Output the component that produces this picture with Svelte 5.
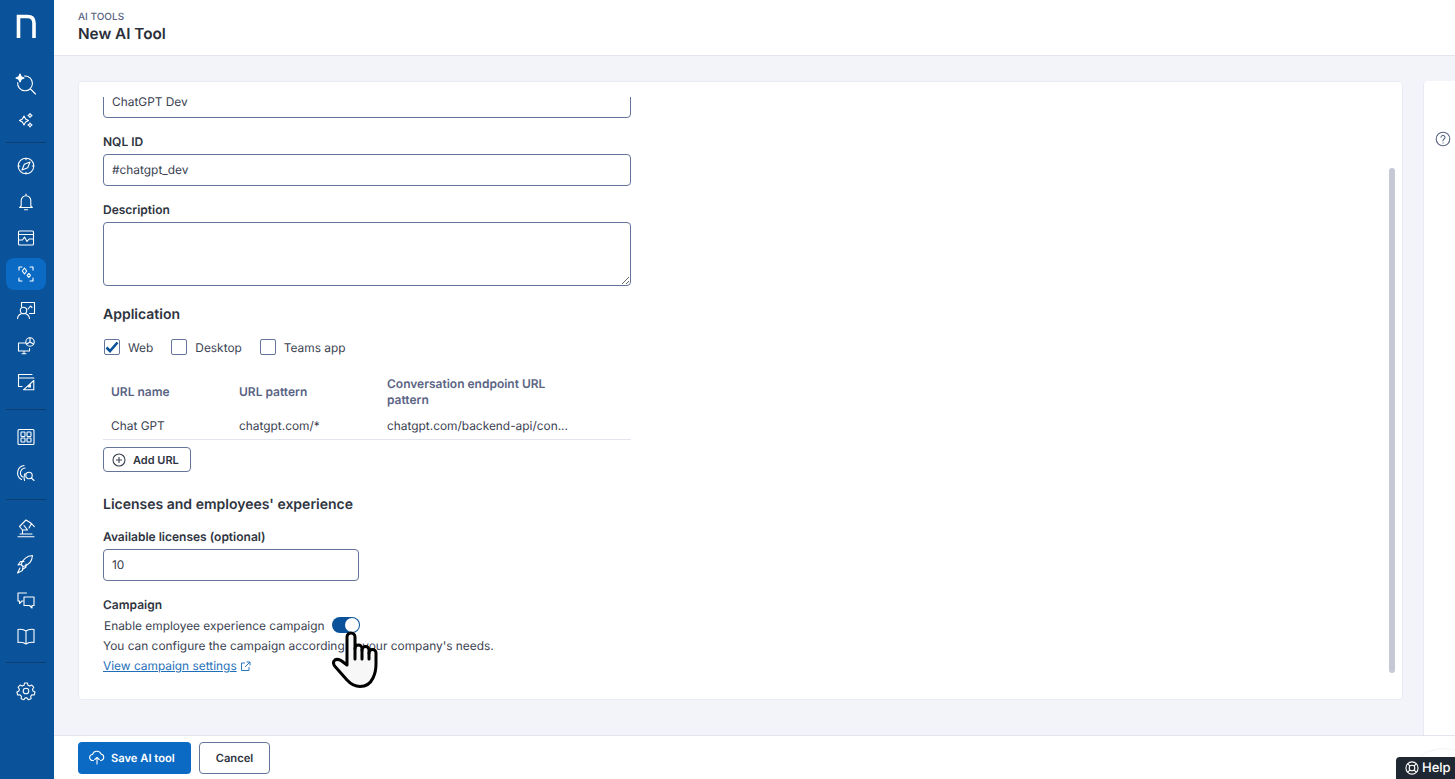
<script lang="ts">
	const groups = [
		['search', 'sparkles'],
		['compass', 'bell', 'chart', 'ai', 'people', 'device', 'design'],
		['grid', 'finger'],
		['robot', 'rocket', 'chat', 'book'],
		['gear']
	];

	const urls = [{ name: 'Chat GPT', pattern: 'chatgpt.com/*', endpoint: 'chatgpt.com/backend-api/con...' }];
</script>

{#snippet icon(name: string)}
	<svg width="22" height="22" viewBox="0 0 22 22" fill="none" stroke="currentColor" stroke-width="1.1" stroke-linecap="round" stroke-linejoin="round">
		{#if name === 'search'}
			<path d="M9.500 3a7.400 7.400 0 1 1-6.800 6.500M15 15.500l5.500 5.500" />
			<path d="M5 1l1.200 2.800L9 5 6.200 6.200 5 9 3.800 6.200 1 5l2.800-1.200z" fill="currentColor" />
		{:else if name === 'sparkles'}
			<path d="M9 7l1.600 2.900 2.900 1.600-2.900 1.600L9 16l-1.600-2.900-2.900-1.600 2.900-1.600z" />
			<path d="M15 4.500l.8 1.200 1.200.8-1.200.8-.8 1.200-.8-1.200-1.200-.8 1.200-.8zM15 14l.8 1.200 1.200.8-1.200.8-.8 1.200-.8-1.200-1.200-.8 1.200-.8z" />
		{:else if name === 'compass'}
			<circle cx="11" cy="11" r="7.800" />
			<path d="M15 7l-2.300 5.700L7 15l2.300-5.700zM11 3.200v1.500M11 17.300v1.500M3.200 11h1.500M17.300 11h1.500" />
		{:else if name === 'bell'}
			<path d="M6.200 15V9.500a4.800 4.800 0 0 1 9.600 0V15l1.500 1.500H4.700zM9.500 18.800h3M11 3v1.500" />
		{:else if name === 'chart'}
			<rect x="3.500" y="4" width="15" height="14" rx="1" />
			<path d="M3.500 7.500h15M3.500 13h4l2-3 2.500 4.500 2-2.500h4.500" />
		{:else if name === 'ai'}
			<path d="M4 7V4h3M15 4h3v3M18 15v3h-3M7 18H4v-3" />
			<path d="M9.500 5l2.200 3-2.200 3-2.200-3zM13.800 10.500l1.700 1.800-1.700 2-1.700-2z" />
		{:else if name === 'people'}
			<path d="M6.500 3.500h13v11h-5M6.500 3.500v4" />
			<circle cx="8.500" cy="11.500" r="3.200" />
			<path d="M2.500 19.500c.5-3.500 2.800-5 6-5s5.500 1.500 6 5M13 10l2.500-3 1.500 1.500" />
		{:else if name === 'device'}
			<path d="M11 8H3.500v8h11v-2.500M7 18.800h4M9 16v2.800" />
			<circle cx="15" cy="7" r="4.200" />
			<path d="M15 2.800V7l3.600 2.200M15 7l-3.600 2.200" />
		{:else if name === 'design'}
			<path d="M17 3.500H3.500v12h3.500M3.500 7h15.500" />
			<path d="M18.800 9.500v9.300H8.500zM15.500 16h-2l2-2z" />
		{:else if name === 'grid'}
			<rect x="3" y="3.500" width="16" height="15" rx="1" />
			<rect x="6" y="6" width="4" height="4.500" rx=".8" /><rect x="12" y="6" width="4" height="4.500" rx=".8" />
			<rect x="6" y="12" width="4" height="4" rx=".8" /><rect x="12" y="12" width="4" height="4" rx=".8" />
		{:else if name === 'finger'}
			<path d="M9 3.500A7.500 7.500 0 0 0 6.500 17.500M10 6a5 5 0 0 0-2.500 9M9.500 18.500c-1-2.500-.5-5 .5-7" />
			<circle cx="14" cy="13.500" r="3.200" />
			<path d="M16.500 16l2.500 2.500" />
		{:else if name === 'robot'}
			<path d="M3 19.800h16M5 17h12M7.500 17v-4L4.500 9.500 11 3l5.500 3.500M7.500 13h5l-3.500-4.500M16.500 6.500l2.800 3.200M16.500 6.500L14 11" />
		{:else if name === 'rocket'}
			<path d="M8 13.500L6 11.500c1.500-4 5-8.500 11.500-9C17 9 12.500 12.500 8 13.500zM6 11.500l-3 .5 2.500-3.500H9M8 13.500l-.5 3 3.500-2.500v-3M5 15l-2.500 5 5-2.500" />
		{:else if name === 'chat'}
			<path d="M11.500 4H3v8h1.500v2.500L7 12h1.200" />
			<path d="M9 8h10v8.500h-2V19l-2.500-2.500H9z" />
		{:else if name === 'book'}
			<path d="M11 6c-2-1.500-5-2-8-1.500v13c3-.5 6 0 8 1.500 2-1.500 5-2 8-1.500v-13c-3-.5-6 0-8 1.500zM11 6v13" />
		{:else if name === 'gear'}
			<circle cx="11" cy="11" r="2.800" />
			<path d="M9.500 3h3l.5 2.300 1.700.8 2.100-1.100 2 2.300-1.300 1.900.5 1.800 2 1-.8 3-2.300-.1-1.200 1.500.4 2.300-2.800 1.100-1.300-1.900h-1.800l-1.300 1.900-2.800-1.100.4-2.300L5 14.900l-2.300.1-.8-3 2-1 .5-1.800L3.100 7.300l2-2.300 2.100 1.100L9 5.300z" />
		{/if}
	</svg>
{/snippet}

<div class="app">
	<nav class="rail">
		<div class="logo">
			<svg width="20" height="24" viewBox="0 0 20 24" fill="none"><path d="M2.500 24V2.500h9q6.500 0 6.500 6.500v15" stroke="#fff" stroke-width="3.600" /></svg>
		</div>
		{#each groups as group, i}
			{#if i > 0}<hr class:tight={i === 1} class:even={i === 2} />{/if}
			<div class="group">
				{#each group as name}
					<div class="item" class:active={name === 'ai'}>{@render icon(name)}</div>
				{/each}
			</div>
		{/each}
	</nav>

	<div class="page">
		<header>
			<span class="crumb">AI TOOLS</span>
			<h1>New AI Tool</h1>
		</header>

		<main>
			<section class="card">
				<div class="scroll">
					<input class="field first" value="ChatGPT Dev" />

					<label class="lbl" for="nql">NQL ID</label>
					<input id="nql" class="field" value="#chatgpt_dev" />

					<label class="lbl" for="desc">Description</label>
					<textarea id="desc" class="field area"></textarea>

					<h2>Application</h2>
					<div class="checks">
						<span class="check">
							<span class="box">
								<svg width="14" height="12" viewBox="0 0 14 12" fill="none"><path d="M1.500 6.500l3.500 3.500 7.500-8.500" stroke="#0a5299" stroke-width="2.600" /></svg>
							</span>Web
						</span>
						<span class="check"><span class="box"></span>Desktop</span>
						<span class="check"><span class="box"></span>Teams app</span>
					</div>

					<table>
						<thead>
							<tr><th class="c1">URL name</th><th class="c2">URL pattern</th><th>Conversation endpoint URL<br />pattern</th></tr>
						</thead>
						<tbody>
							{#each urls as url}
								<tr><td>{url.name}</td><td>{url.pattern}</td><td>{url.endpoint}</td></tr>
							{/each}
						</tbody>
					</table>

					<button class="add">
						<svg width="14" height="14" viewBox="0 0 14 14" fill="none" stroke="#3a4150" stroke-width="1.100"><circle cx="7" cy="7" r="6" /><path d="M7 4v6M4 7h6" /></svg>
						Add URL
					</button>

					<h2 class="licenses">Licenses and employees' experience</h2>
					<label class="lbl lic" for="lic">Available licenses (optional)</label>
					<input id="lic" class="field short" value="10" />

					<div class="lbl">Campaign</div>
					<div class="toggle-row">
						Enable employee experience campaign
						<span class="toggle"><span class="knob"></span></span>
					</div>
					<p>You can configure the campaign according to your company's needs.</p>
					<div class="link-row">
						<a href="#campaign">View campaign settings</a>
						<svg width="11" height="11" viewBox="0 0 11 11" fill="none" stroke="#2f78bd" stroke-width="1"><path d="M5 2H1.500v7.500H9V6M6.500 1H10v3.500M10 1L5 6" /></svg>
					</div>

					<svg class="hand" width="46" height="58" viewBox="0 0 46 58" fill="#f7f7f7" stroke="#000" stroke-width="3" stroke-linejoin="round" stroke-linecap="round">
						<path d="M15 34L9 29.500Q4 27 2 30Q.5 33 3.500 36L15 49Q21 55.500 28 55.500Q37 55.500 41 47Q44 41 44 33V22A3.500 3.500 0 0 0 37 22V19A3.500 3.500 0 0 0 30 19V17.500A3.500 3.500 0 0 0 23 17.500V6A4 4 0 0 0 15 6Z" />
						<path d="M23 17.500V28M30 19V28M37 22V28" fill="none" />
					</svg>
				</div>
				<span class="thumb"></span>
			</section>

			<aside class="side">
				<svg width="16" height="16" viewBox="0 0 16 16" fill="none" stroke="#5a6484" stroke-width="1.100" stroke-linecap="round"><circle cx="8" cy="8" r="6.800" /><path d="M6 6.300a2 2 0 1 1 3 1.800c-.7.400-1 .8-1 1.600" /><path d="M8 11.800v.1" /></svg>
			</aside>
		</main>

		<footer>
			<button class="save">
				<svg width="16" height="15" viewBox="0 0 16 15" fill="none" stroke="#fff" stroke-width="1.100" stroke-linecap="round" stroke-linejoin="round"><path d="M4.500 10.500H3.800a3 3 0 0 1-.3-6A4.500 4.500 0 0 1 12 4a3.300 3.300 0 0 1 0 6.500h-.5M8 14V7.500M5.800 9.500L8 7.300l2.200 2.200" /></svg>
				Save AI tool
			</button>
			<button class="cancel">Cancel</button>
		</footer>
	</div>

	<div class="help-halo"></div>
	<div class="help">
		<svg width="14" height="14" viewBox="0 0 15 15" fill="none" stroke="#fff" stroke-width="1.200"><circle cx="7.500" cy="7.500" r="6.500" /><circle cx="7.500" cy="7.500" r="3" /><path d="M3 3l2.400 2.400M12 3L9.600 5.400M3 12l2.400-2.400M12 12L9.600 9.600" /></svg>
		Help
	</div>
</div>

<style>
	:global(body) {
		margin: 0;
		overflow: hidden;
	}

	.app {
		display: flex;
		height: 779px;
		position: relative;
		overflow: hidden;
		font-family: Inter, 'Liberation Sans', sans-serif;
		text-rendering: geometricPrecision;
		color: #3a4150;
		font-size: 11.900px;
	}

	input,
	textarea,
	button {
		text-rendering: inherit;
	}

	.rail {
		width: 54px;
		flex: none;
		box-sizing: border-box;
		padding-right: 2px;
		background: #0a5299;
		color: #fff;
		display: flex;
		flex-direction: column;
		align-items: center;
	}

	.logo {
		height: 38px;
		padding-top: 14px;
		margin-bottom: 16px;
	}

	.logo svg {
		display: block;
	}

	.group {
		display: flex;
		flex-direction: column;
		align-items: center;
		gap: 4px;
	}

	.item {
		width: 40px;
		height: 32px;
		border-radius: 8px;
		display: flex;
		align-items: center;
		justify-content: center;
	}

	.item.active {
		background: #0b6bc4;
	}

	hr {
		width: 40px;
		border: 0;
		border-top: 1px solid #0b3f74;
		margin: 10px 0 12px;
	}

	hr.tight {
		margin: 6px 0 7px;
	}

	hr.even {
		margin: 11px 0 11px;
	}

	.page {
		flex: 1;
		min-width: 0;
		display: flex;
		flex-direction: column;
		background: #f3f4f9;
	}

	header {
		height: 56px;
		box-sizing: border-box;
		background: #fff;
		border-bottom: 1px solid #e3e5ec;
		padding: 12px 24px 0;
		flex: none;
	}

	.crumb {
		display: block;
		font-size: 10px;
		line-height: 11px;
		font-weight: 500;
		color: #5a6484;
	}

	h1 {
		margin: 1px 0 0;
		font-size: 15.300px;
		line-height: 20px;
		font-weight: 600;
		color: #2a2f3a;
	}

	main {
		flex: 1;
		min-height: 0;
		display: flex;
		padding-top: 25px;
		padding-left: 24px;
		gap: 20px;
	}

	.card {
		width: 1325px;
		height: 619px;
		flex: none;
		box-sizing: border-box;
		background: #fff;
		border: 1px solid #e9ebf2;
		border-radius: 4px;
		position: relative;
		padding: 15px 0 0 24px;
	}

	.scroll {
		height: 602px;
		overflow: hidden;
		width: 700px;
		position: relative;
	}

	.field {
		display: block;
		box-sizing: border-box;
		width: 528px;
		height: 32px;
		border: 1px solid #64749a;
		border-radius: 4px;
		padding: 0 8px 1px;
		font: 11.900px Inter, 'Liberation Sans', sans-serif;
		color: #3a4150;
		background: #fff;
		outline: none;
	}

	.first {
		margin-top: -11px;
	}

	.area {
		height: 64px;
	}

	.short {
		width: 256px;
	}

	.lbl {
		display: block;
		font-size: 12px;
		line-height: 16px;
		font-weight: 600;
		color: #2e3440;
		margin: 16px 0 4px;
	}

	.lbl.lic {
		margin-top: 14px;
	}

	h2 {
		margin: 19px 0 0;
		font-size: 14px;
		line-height: 20px;
		font-weight: 600;
		color: #2e3440;
	}

	.checks {
		display: flex;
		gap: 18px;
		margin: 12px 0 0 1px;
		height: 20px;
	}

	.check {
		display: flex;
		align-items: center;
		gap: 8px;
	}

	.box {
		width: 16px;
		height: 16px;
		box-sizing: border-box;
		border: 1px solid #64749a;
		border-radius: 2px;
		display: flex;
		align-items: center;
		justify-content: center;
	}

	table {
		width: 528px;
		border-collapse: collapse;
		margin-top: 11px;
		table-layout: fixed;
	}

	th {
		text-align: left;
		font-weight: 600;
		font-size: 12px;
		line-height: 16px;
		color: #5a6484;
		padding: 8px 8px 6px 8px;
	}

	.c1 {
		width: 112px;
	}

	.c2 {
		width: 132px;
	}

	td {
		padding: 4px 8px 5px 8px;
		line-height: 16px;
		border-bottom: 1px solid #e3e5ec;
		white-space: nowrap;
	}

	.add {
		display: flex;
		align-items: center;
		gap: 7px;
		height: 25px;
		width: 88px;
		box-sizing: border-box;
		margin-top: 7px;
		padding: 0 0 0 8px;
		background: #fff;
		border: 1px solid #64749a;
		border-radius: 4px;
		font: 600 11px Inter, 'Liberation Sans', sans-serif;
		color: #2e3440;
	}

	.licenses {
		margin-top: 23px;
	}

	.toggle-row {
		display: flex;
		align-items: center;
		gap: 7px;
		height: 16px;
		padding-left: 1px;
	}

	.toggle {
		width: 28px;
		height: 16px;
		border-radius: 8px;
		background: #0a5299;
		display: flex;
		justify-content: flex-end;
		align-items: center;
		padding-right: 1px;
		box-sizing: border-box;
	}

	.knob {
		width: 14px;
		height: 14px;
		border-radius: 50%;
		background: #fff;
	}

	p {
		margin: 5px 0 0;
		line-height: 16px;
	}

	.link-row {
		display: flex;
		align-items: center;
		gap: 3px;
		margin-top: 4px;
	}

	a {
		color: #1e6fb8;
		line-height: 16px;
	}

	.hand {
		position: absolute;
		left: 229px;
		top: 534px;
	}

	.thumb {
		position: absolute;
		left: 1310px;
		top: 86px;
		width: 6px;
		height: 505px;
		border-radius: 3px;
		background: #c5c9d6;
	}

	.side {
		flex: 1;
		background: #fff;
		border-left: 1px solid #e9ebf2;
		border-top-left-radius: 4px;
		padding: 50px 0 0 11px;
	}

	footer {
		height: 44px;
		flex: none;
		box-sizing: border-box;
		background: #fff;
		border-top: 1px solid #e3e5ec;
		display: flex;
		align-items: center;
		gap: 8px;
		padding: 0 0 0 24px;
	}

	footer button {
		height: 32px;
		box-sizing: border-box;
		border-radius: 4px;
		font: 600 11.200px Inter, 'Liberation Sans', sans-serif;
	}

	.save {
		width: 113px;
		background: #0b6bc4;
		border: 0;
		color: #fff;
		display: flex;
		align-items: center;
		gap: 6px;
		padding: 0 0 0 11px;
	}

	.cancel {
		width: 71px;
		background: #fff;
		border: 1px solid #64749a;
		color: #2e3440;
	}

	.help-halo {
		position: absolute;
		left: 1404px;
		top: 748px;
		width: 80px;
		height: 80px;
		box-sizing: border-box;
		border: 1px solid #f4f4f6;
		border-radius: 50%;
		background: #fff;
	}

	.help {
		position: absolute;
		left: 1396px;
		top: 757px;
		width: 59px;
		height: 22px;
		box-sizing: border-box;
		background: #1f2733;
		border-top-left-radius: 4px;
		color: #fff;
		font-size: 13px;
		font-weight: 500;
		display: flex;
		align-items: center;
		gap: 3px;
		padding-left: 9px;
	}
</style>
